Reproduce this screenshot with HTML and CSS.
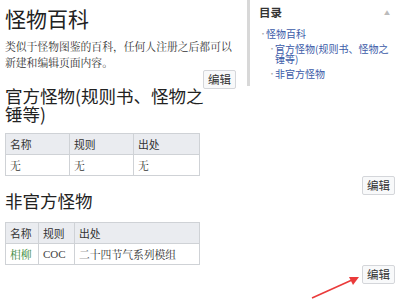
FILE: index.html
```html
<!DOCTYPE html>
<html lang="zh-CN">
<head>
    <meta charset="UTF-8">
    <meta name="viewport" content="width=device-width, initial-scale=1.0">
    <title>怪物百科</title>
    <link rel="stylesheet" href="styles.css">
</head>
<body>
    <div class="top">
        <div class="intro">
            <h1 class="title">怪物百科</h1>
            <p class="lead">类似于怪物图鉴的百科，任何人注册之后都可以新建和编辑页面内容。</p>
            <div class="edit-row"><button class="edit-btn">编辑</button></div>
        </div>
        <div class="toc">
            <div class="toc-head">
                <span class="toc-title">目录</span>
                <span class="toc-toggle">▲</span>
            </div>
            <ul class="toc-list">
                <li><a href="#">怪物百科</a>
                    <ul>
                        <li><a href="#">官方怪物(规则书、怪物之锤等)</a></li>
                        <li><a href="#">非官方怪物</a></li>
                    </ul>
                </li>
            </ul>
        </div>
    </div>

    <section class="section">
        <h2 class="heading">官方怪物(规则书、怪物之锤等)</h2>
        <table class="wikitable">
            <colgroup><col class="c-eq"><col class="c-eq"><col></colgroup>
            <tr><th>名称</th><th>规则</th><th>出处</th></tr>
            <tr><td>无</td><td>无</td><td>无</td></tr>
        </table>
        <div class="edit-row"><button class="edit-btn">编辑</button></div>
    </section>

    <section class="section second">
        <h2 class="heading">非官方怪物</h2>
        <table class="wikitable">
            <colgroup><col class="c-name"><col class="c-rule"><col></colgroup>
            <tr><th>名称</th><th>规则</th><th>出处</th></tr>
            <tr><td><a class="green" href="#">相柳</a></td><td class="latin">COC</td><td>二十四节气系列模组</td></tr>
        </table>
        <div class="edit-row"><button class="edit-btn">编辑</button></div>
    </section>

    <svg class="arrow" width="400" height="308" viewBox="0 0 400 308">
        <line x1="312" y1="298" x2="352" y2="280" stroke="#ea3b3b" stroke-width="1.6"/>
        <polygon points="359,277 349,277 353,285" fill="#ea3b3b"/>
    </svg>
</body>
</html>
```

FILE: styles.css
```css
body {
    margin: 0;
    padding: 0 5px;
    font-family: "Noto Serif CJK SC", "Liberation Serif", "Noto Sans CJK SC", serif;
    color: #222;
    background: #fff;
}
.top {
    display: flex;
}
.intro {
    width: 231px;
    flex: none;
}
.title {
    margin: 0;
    padding-top: 3px;
    font-family: "Noto Sans CJK SC", sans-serif;
    font-weight: normal;
    font-size: 21px;
    line-height: 30px;
    color: #222;
}
.lead {
    margin: 6px 0 0;
    font-size: 10.8px;
    line-height: 16px;
    color: #333;
}
.edit-row {
    display: flex;
    justify-content: flex-end;
}
.intro .edit-row {
    margin-top: -1px;
}
.edit-btn {
    font-family: "Noto Sans CJK SC", sans-serif;
    font-size: 11.5px;
    line-height: 17px;
    height: 19px;
    padding: 0 4px;
    color: #333;
    background: #f8f9fa;
    border: 1px solid #d4d6da;
    border-radius: 2px;
}
.toc {
    flex: 1;
    margin-left: 11px;
    border-left: 3px solid #d8d8d8;
    padding: 4px 5px 8px 9px;
    font-family: "Noto Sans CJK SC", sans-serif;
    font-size: 10px;
    height: 74px;
}
.toc-head {
    display: flex;
    justify-content: space-between;
    align-items: center;
}
.toc-title {
    font-weight: bold;
    font-size: 11.5px;
    color: #333;
}
.toc-toggle {
    font-size: 6px;
    color: #bbb;
    margin-right: 0;
}
.toc-list,
.toc-list ul {
    list-style: none;
    margin: 0;
    padding: 0;
}
.toc-list {
    margin-top: 9px;
}
.toc-list ul {
    padding-left: 2px;
    margin-top: 4px;
}
.toc-list li {
    position: relative;
    padding-left: 7px;
    line-height: 10.5px;
    margin-bottom: 4px;
}
.toc-list li::before {
    content: "•";
    position: absolute;
    left: 0;
    top: 0;
    color: #aaa;
    font-size: 8px;
}
.toc-list > li > a {
    display: block;
}
.toc a {
    color: #3b5ba8;
    text-decoration: none;
}
.heading {
    margin: -2px 0 0;
    width: 200px;
    font-family: "Noto Sans CJK SC", sans-serif;
    font-weight: normal;
    font-size: 17.5px;
    line-height: 18px;
    color: #222;
}
.wikitable {
    margin-top: 10px;
    width: 195px;
    border-collapse: collapse;
    table-layout: fixed;
    font-size: 10.8px;
}
.wikitable th,
.wikitable td {
    border: 1px solid #cfd2d6;
    padding: 0 4px;
    height: 20px;
    text-align: left;
    font-weight: normal;
    color: #333;
}
.wikitable th {
    background: #eaecf0;
    font-family: "Noto Sans CJK SC", sans-serif;
}
.c-eq {
    width: 64px;
}
.c-name {
    width: 33px;
}
.c-rule {
    width: 36px;
}
.second .heading {
    margin-top: -3px;
}
.second .wikitable {
    margin-top: 12px;
}
.wikitable td.latin {
    font-family: "Liberation Serif", serif;
    font-size: 11px;
    color: #444;
}
.green {
    color: #3a8a3a;
    text-decoration: none;
}
.arrow {
    position: absolute;
    left: 0;
    top: 0;
    pointer-events: none;
}
```
